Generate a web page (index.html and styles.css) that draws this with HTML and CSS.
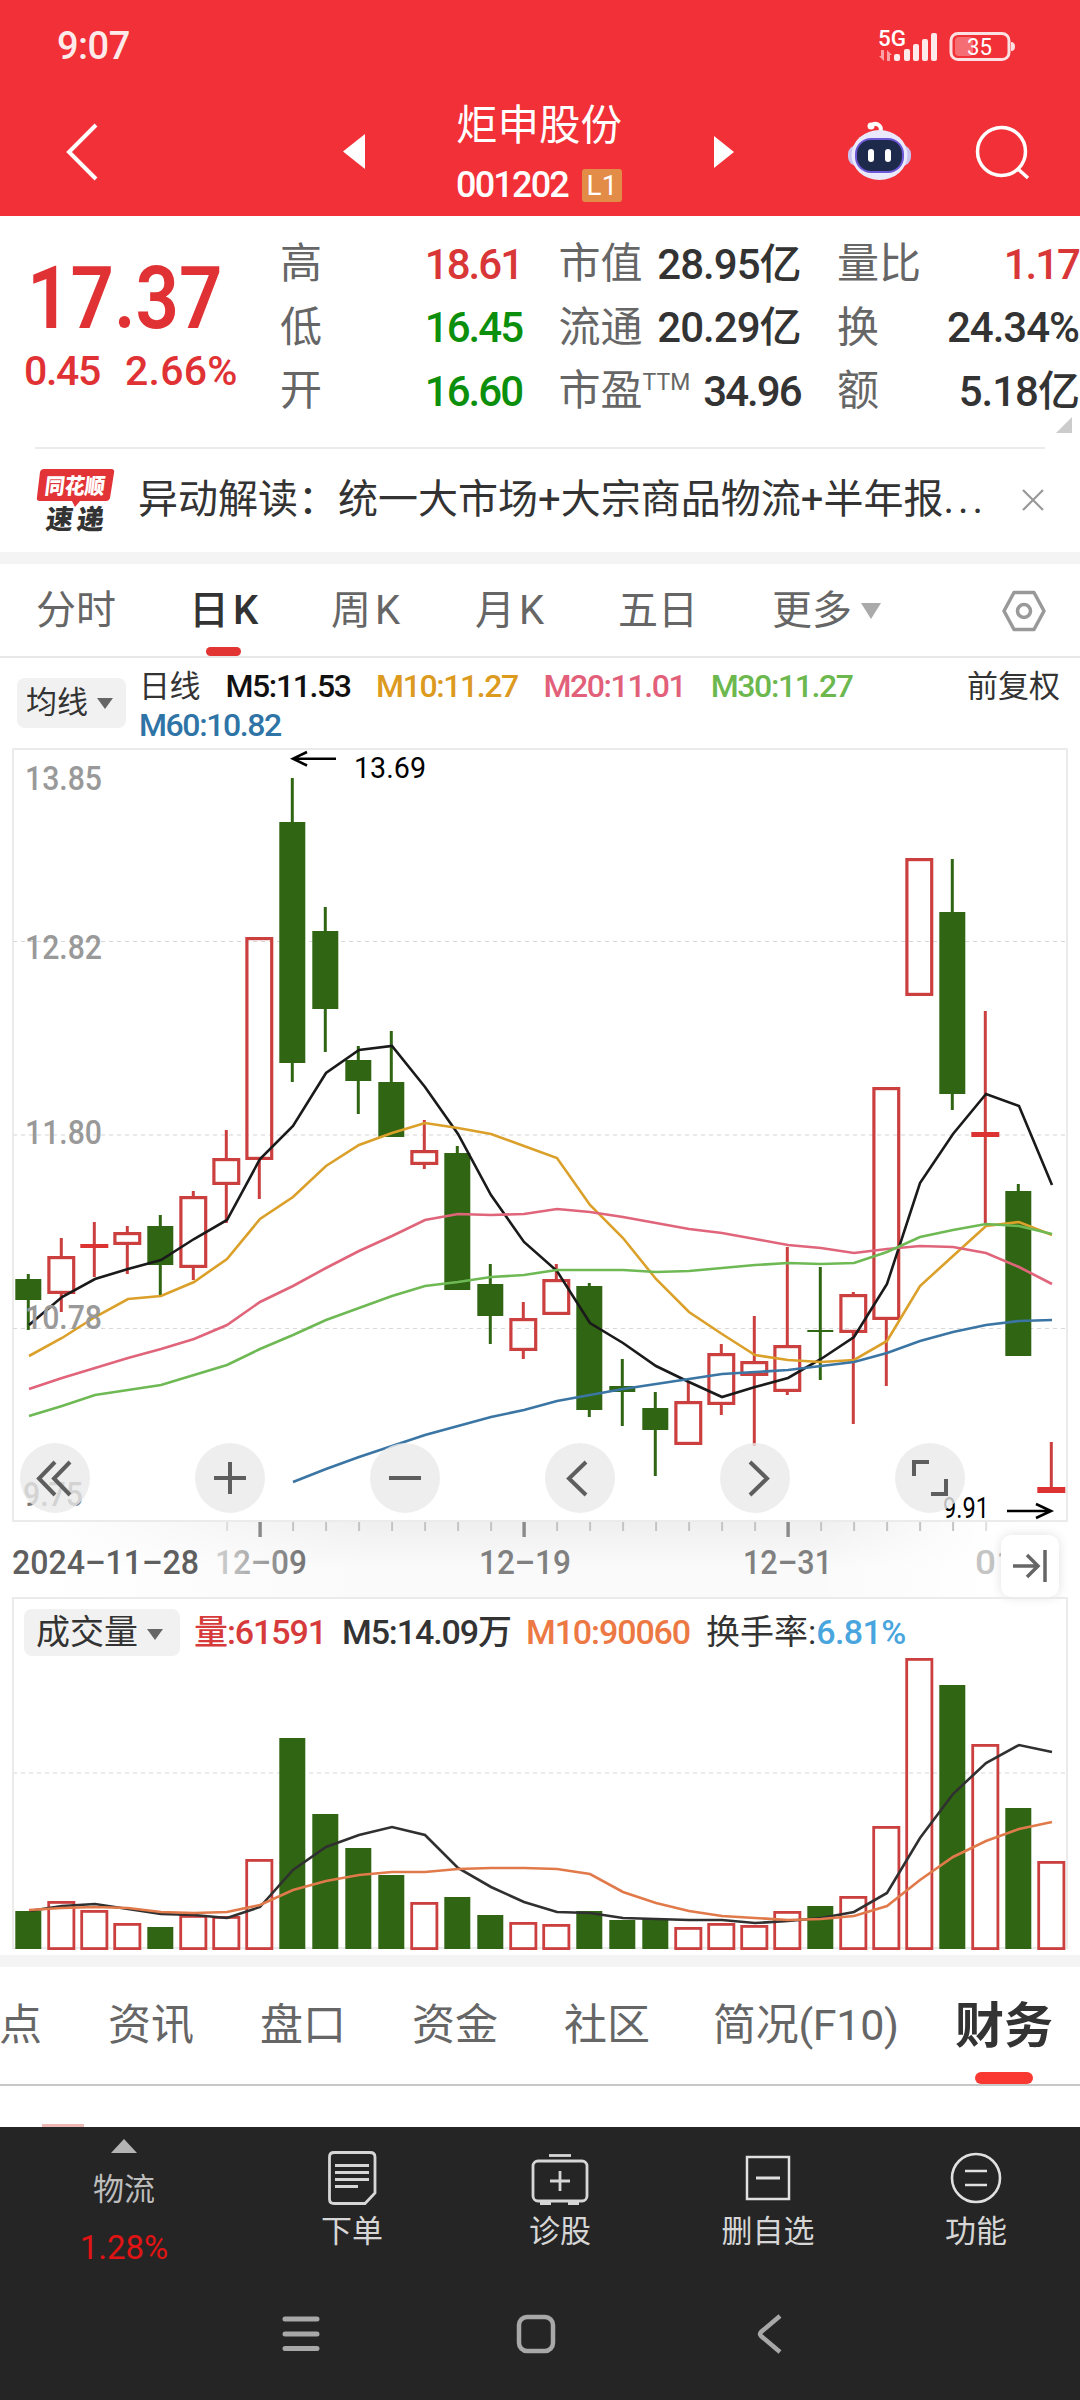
FILE: index.html
```html
<!DOCTYPE html>
<html lang="zh-CN">
<head>
<meta charset="UTF-8">
<meta name="viewport" content="width=device-width, initial-scale=1.0">
<title>炬申股份 001202</title>
<link rel="stylesheet" href="styles.css">
</head>
<body>

<header class="header">
  <div class="status">
    <span class="clock">9:07</span>
    <svg class="status-icons" width="140" height="36" viewBox="877 27 140 36">
      <text class="net" x="878" y="45" textLength="28" lengthAdjust="spacingAndGlyphs">5G</text>
      <g fill="#fff" fill-opacity=".55">
        <path d="M881 49h3v11l-5-5h2zM887 60h3v-6h2l-5-5z"/>
      </g>
      <g fill="#fff" fill-opacity=".9">
        <rect x="894" y="53" width="6" height="7" rx="2"/>
        <rect x="904" y="48" width="6" height="12" rx="2"/>
        <rect x="913" y="43" width="6" height="17" rx="2"/>
        <rect x="922" y="38" width="6" height="22" rx="2"/>
        <rect x="931" y="32" width="6" height="28" rx="2"/>
      </g>
      <rect x="951" y="32.500" width="58" height="26" rx="7" fill="none" stroke="#fff" stroke-opacity=".85" stroke-width="3"/>
      <rect x="955" y="36" width="18" height="19" rx="4" fill="#fff" fill-opacity=".3"/>
      <path d="M1011 41q4 0 4 4.500t-4 4.500z" fill="#fff" fill-opacity=".85"/>
      <text class="batt" x="967" y="54" textLength="25" lengthAdjust="spacingAndGlyphs">35</text>
    </svg>
  </div>
  <div class="titlebar">
    <svg class="back" width="34" height="60" viewBox="65 121 34 60"><path d="M96 124L69 151L96 178" fill="none" stroke="#fff" stroke-width="4"/></svg>
    <svg class="prev" width="24" height="38" viewBox="342 134 24 38"><path d="M343 152.500L365 135V170z" fill="#fff"/></svg>
    <div class="stock">
      <div class="stock-name">炬申股份</div>
      <div class="stock-code"><span class="code">001202</span><span class="level">L1</span></div>
    </div>
    <svg class="next" width="24" height="38" viewBox="712 134 24 38"><path d="M734 153L714 137V169z" fill="#fff"/></svg>
    <svg class="robot" width="66" height="64" viewBox="847 120 66 64">
      <path d="M880 133C883 126 877 122 872 125" fill="none" stroke="#fff" stroke-width="4" stroke-linecap="round"/>
      <circle cx="871" cy="126" r="3.500" fill="#fff"/>
      <rect x="848" y="145" width="63" height="21" rx="9" fill="#c9c2f0"/>
      <ellipse cx="879.500" cy="155" rx="28" ry="25" fill="#e9e9fb"/>
      <rect x="855" y="138" width="49" height="35" rx="16" fill="#6d58d6"/>
      <rect x="857" y="140" width="45" height="31" rx="14" fill="#1e2a4c"/>
      <rect x="868" y="149" width="6" height="13" rx="3" fill="#fff"/>
      <rect x="885" y="149" width="6" height="13" rx="3" fill="#fff"/>
    </svg>
    <svg class="search" width="56" height="58" viewBox="974 123 56 58"><g fill="none" stroke="#fff" stroke-width="3.500"><circle cx="1001.500" cy="151.500" r="24"/><path d="M1018 169L1028 178"/></g></svg>
  </div>
</header>

<section class="quote">
  <div class="last">
    <div class="price">17.37</div>
    <div class="change"><span>0.45</span><span class="pct">2.66%</span></div>
  </div>
  <div class="stats">
    <div class="stat"><span class="label">高</span><span class="val up">18.61</span></div>
    <div class="stat"><span class="label">市值</span><span class="val wide">28.95亿</span></div>
    <div class="stat"><span class="label">量比</span><span class="val up">1.17</span></div>
    <div class="stat"><span class="label">低</span><span class="val down">16.45</span></div>
    <div class="stat"><span class="label">流通</span><span class="val wide">20.29亿</span></div>
    <div class="stat"><span class="label">换</span><span class="val wide">24.34%</span></div>
    <div class="stat"><span class="label">开</span><span class="val down">16.60</span></div>
    <div class="stat"><span class="label">市盈<sup>TTM</sup></span><span class="val">34.96</span></div>
    <div class="stat"><span class="label">额</span><span class="val wide">5.18亿</span></div>
  </div>
  <div class="expand"></div>
</section>

<section class="news">
  <svg class="news-logo" width="80" height="66" viewBox="34 466 80 66">
    <path d="M43 468H110Q114 468 113 472L109 497Q108 500 105 500H79L74 506L71 500H39Q35 500 36 496L39 471Q40 468 43 468z" fill="#e23336"/>
    <text class="logo-top" transform="translate(43 493) skewX(-7)" textLength="60" lengthAdjust="spacingAndGlyphs">同花顺</text>
    <text class="logo-bottom" transform="translate(44 528) skewX(-7)" textLength="58">速递</text>
  </svg>
  <span class="news-text">异动解读：统一大市场+大宗商品物流+半年报<span class="dots">...</span></span>
  <svg class="close" width="24" height="24" viewBox="0 0 24 24"><path d="M2 2L22 22M22 2L2 22" stroke="#999" stroke-width="2.200"/></svg>
</section>

<nav class="periods">
  <span class="period">分时</span>
  <span class="period active">日<i>K</i></span>
  <span class="period">周<i>K</i></span>
  <span class="period">月<i>K</i></span>
  <span class="period">五日</span>
  <span class="period more">更多</span>
  <svg class="gear" width="44" height="44" viewBox="0 0 44 44"><g fill="none" stroke="#999" stroke-width="3.500"><path d="M12 3.500H32L42 22L32 40.500H12L2 22z" stroke-linejoin="round"/><circle cx="22" cy="22" r="6.500"/></g></svg>
</nav>

<section class="ma">
  <span class="pill ma-pill">均线</span>
  <div class="ma-list">
    <span class="ma-name">日线</span>
    <span class="m5">M5:11.53</span>
    <span class="m10">M10:11.27</span>
    <span class="m20">M20:11.01</span>
    <span class="m30">M30:11.27</span>
    <span class="m60">M60:10.82</span>
  </div>
  <span class="adjust">前复权</span>
</section>

<section class="kline">
  <svg id="kline" width="1080" height="773" viewBox="0 749 1080 773"></svg>
  <div class="tools">
    <span class="tool"><svg viewBox="0 0 70 70"><path d="M35 19L19 35.500L35 52M50 19L34 35.500L50 52"/></svg></span>
    <span class="tool"><svg viewBox="0 0 70 70"><path d="M19 35H51M35 19V51"/></svg></span>
    <span class="tool"><svg viewBox="0 0 70 70"><path d="M19 35H51"/></svg></span>
    <span class="tool"><svg viewBox="0 0 70 70"><path d="M41 19L24 35.500L41 52"/></svg></span>
    <span class="tool"><svg viewBox="0 0 70 70"><path d="M30 19L47 35.500L30 52"/></svg></span>
    <span class="tool"><svg viewBox="0 0 70 70"><path d="M19 33V19H34M51 36V51H36"/></svg></span>
  </div>
</section>

<section class="axis">
  <svg id="axis" width="1080" height="76" viewBox="0 1522 1080 76"></svg>
  <span class="to-end"><svg width="36" height="34" viewBox="0 0 36 34"><path d="M1 17H26M15 6L26 17L15 28M33 1V33" fill="none" stroke="#666" stroke-width="3.500"/></svg></span>
</section>

<section class="volume">
  <svg id="volume" width="1080" height="357" viewBox="0 1598 1080 357"></svg>
  <div class="vol-head">
    <span class="pill vol-pill">成交量</span>
    <span class="v-now">量:61591</span>
    <span class="v-m5">M5:14.09万</span>
    <span class="v-m10">M10:90060</span>
    <span class="v-rate">换手率:<b>6.81%</b></span>
  </div>
</section>

<nav class="sections">
  <span>点</span>
  <span>资讯</span>
  <span>盘口</span>
  <span>资金</span>
  <span>社区</span>
  <span class="f10">简况(F10)</span>
  <span class="current">财务</span>
</nav>
<div class="content"><div class="peek"></div></div>

<footer class="bottom">
  <div class="actions">
    <div class="sector">
      <svg width="26" height="14" viewBox="0 0 26 14"><path d="M13 0L26 14H0z" fill="#b4b4b4"/></svg>
      <span class="sector-name">物流</span>
      <span class="sector-pct">1.28%</span>
    </div>
    <div class="action">
      <svg width="60" height="60" viewBox="322 2148 60 60"><g fill="none" stroke="#d6d6d6" stroke-width="2.800"><path d="M334 2152.500H370Q375 2152.500 375 2157V2193L365 2203.500H334Q329.500 2203.500 329.500 2199V2157Q329.500 2152.500 334 2152.500z"/><path d="M335 2165.500H369M335 2172.500H369M335 2179.500H369M335 2186.500H358"/></g></svg>
      <span>下单</span>
    </div>
    <div class="action">
      <svg width="60" height="60" viewBox="530 2148 60 60"><g fill="none" stroke="#d6d6d6" stroke-width="2.800"><path d="M549 2155.500H571"/><rect x="533" y="2161" width="54" height="40" rx="5"/><path d="M560 2171V2191M550 2181H570"/><path d="M540 2203.500H551M568 2203.500H579"/></g></svg>
      <span>诊股</span>
    </div>
    <div class="action">
      <svg width="60" height="60" viewBox="738 2148 60 60"><g fill="none" stroke="#e0e0e0" stroke-width="2.500"><rect x="747" y="2157" width="42" height="42"/><path d="M756 2178H780" stroke-width="3"/></g></svg>
      <span>删自选</span>
    </div>
    <div class="action">
      <svg width="60" height="60" viewBox="946 2148 60 60"><g fill="none" stroke="#e0e0e0" stroke-width="2.600"><circle cx="976" cy="2178" r="24"/><path d="M965 2171H987M965 2185H987"/></g></svg>
      <span>功能</span>
    </div>
  </div>
  <div class="sysnav">
    <svg width="38" height="40" viewBox="0 0 38 40"><path d="M3 5H35M3 20H35M3 34.500H35" stroke="#a8a8a8" stroke-width="5" stroke-linecap="round"/></svg>
    <svg width="40" height="40" viewBox="0 0 40 40"><rect x="3" y="3" width="34" height="34" rx="8" fill="none" stroke="#a8a8a8" stroke-width="4.500"/></svg>
    <svg width="26" height="40" viewBox="0 0 26 40"><path d="M23 2L4 18Q2 20 4 22L23 38" fill="none" stroke="#a8a8a8" stroke-width="4.500"/></svg>
  </div>
</footer>

<script src="chart.js"></script>
</body>
</html>
```
FILE: styles.css
```css
* {
  box-sizing: border-box;
}

body {
  margin: 0;
  width: 1080px;
  background: #fff;
  color: #333;
  font-family: Roboto, "Noto Sans CJK SC", sans-serif;
  line-height: 1.2;
  overflow-x: hidden;
}

svg {
  display: block;
  overflow: visible;
}

/* header */
.header {
  height: 216px;
  background: #f13037;
  color: #fff;
}

.status {
  height: 88px;
  display: flex;
  justify-content: space-between;
  align-items: center;
  padding: 4px 63px 0 57px;
}

.clock {
  padding-top: 2px;
  font-size: 38px;
  font-weight: 500;
  letter-spacing: -0.5px;
  opacity: .9;
}

.net {
  font-size: 22px;
  font-weight: 500;
  fill: #fff;
}

.batt {
  font-size: 24px;
  fill: #fff;
}

.titlebar {
  height: 128px;
  display: flex;
  align-items: center;
  padding-left: 65px;
}

.prev {
  margin-left: 243px;
}

.stock {
  width: 346px;
  height: 128px;
  display: flex;
  flex-direction: column;
  align-items: center;
}

.stock-name {
  margin-top: 10px;
  font-size: 41.5px;
  line-height: 56px;
}

.stock-code {
  display: flex;
  align-items: center;
  gap: 14px;
  margin-top: 14px;
}

.code {
  font-size: 36px;
  font-weight: 500;
  line-height: 34px;
  letter-spacing: -1.8px;
}

.level {
  width: 40px;
  height: 33px;
  border-radius: 3px;
  background: #e38c48;
  font-size: 28px;
  line-height: 33px;
  text-align: center;
}

.robot {
  margin-left: 111px;
}

.search {
  margin-left: 61px;
}

/* quote */
.quote {
  position: relative;
  height: 231px;
  display: flex;
  padding-top: 16px;
}

.last {
  width: 280px;
  padding-left: 24px;
  color: #e03234;
}

.price {
  margin: 27px 0 0 3px;
  font-size: 88px;
  font-weight: 600;
  line-height: 78px;
  transform: scaleX(.865);
  transform-origin: left;
}

.change {
  display: flex;
  gap: 25px;
  margin-top: 11px;
  font-size: 41px;
  font-weight: 500;
  line-height: 46px;
  letter-spacing: -1.3px;
}

.pct {
  letter-spacing: 0.2px;
}

.stats {
  display: grid;
  grid-template-columns: repeat(3, 242px);
  grid-auto-rows: 63.5px;
  column-gap: 36.5px;
}

.stat {
  display: flex;
  justify-content: space-between;
  align-items: center;
  white-space: nowrap;
  font-size: 42px;
}

.label {
  padding-top: 1px;
  color: #666;
}

.label sup {
  font-size: 23px;
  line-height: 0;
  vertical-align: 15px;
}

.val {
  padding-top: 2px;
  font-weight: 500;
  letter-spacing: -2px;
}

.wide {
  letter-spacing: -1px;
}

.up {
  color: #d93638;
}

.down {
  color: #0c8f0c;
}

.expand {
  position: absolute;
  right: 8px;
  bottom: 14px;
  border-left: 16px solid transparent;
  border-bottom: 16px solid #ccc;
}

/* news strip */
.news {
  height: 105px;
  margin: 0 35px;
  padding-bottom: 2px;
  border-top: 2px solid #ececec;
  display: flex;
  align-items: center;
}

.logo-top {
  font: 900 22px "Noto Sans CJK SC", sans-serif;
  fill: #fff;
}

.logo-bottom {
  font: 900 27px "Noto Sans CJK SC", sans-serif;
  fill: #333;
}

.news-text {
  width: 908px;
  padding-left: 23px;
  font-size: 40px;
  white-space: nowrap;
}

.dots {
  letter-spacing: 4px;
}

.close {
  margin-left: -1px;
}

/* period tabs */
.periods {
  height: 106px;
  border-top: 12px solid #f4f4f4;
  border-bottom: 2px solid #e8e8e8;
  display: flex;
  align-items: center;
  padding: 2px 0 0 36px;
}

.period {
  position: relative;
  width: 78px;
  margin-right: 75px;
  font-size: 40px;
  color: #666;
  white-space: nowrap;
}

.period i {
  font-style: normal;
  margin-left: 4px;
}

.period:nth-child(2) {
  margin-right: 64px;
}

.period:nth-child(3) {
  margin-right: 66px;
}

.period:nth-child(4) {
  margin-right: 65px;
}

.period:nth-child(5) {
  margin-right: 76px;
}

.active {
  color: #333;
  font-weight: 500;
}

.active::after {
  content: "";
  position: absolute;
  left: 17px;
  bottom: -21px;
  width: 35px;
  height: 9px;
  border-radius: 5px;
  background: #e33434;
}

.more::after {
  content: "";
  display: inline-block;
  margin: 0 0 5px 9px;
  border: 10px solid transparent;
  border-top: 16px solid #aaa;
  border-bottom: 0;
}

.gear {
  margin-left: 2px;
}

.more {
  margin-right: 150px;
}

/* moving averages */
.ma {
  height: 91px;
  display: flex;
  padding-left: 17px;
}

.pill {
  background: #f1f1f1;
  border-radius: 8px;
  white-space: nowrap;
}

.pill::after {
  content: "";
  display: inline-block;
  margin: 0 0 4px 9px;
  border: 8px solid transparent;
  border-top: 11px solid #666;
  border-bottom: 0;
}

.ma-pill {
  width: 109px;
  height: 50px;
  margin-top: 20px;
  padding-left: 9px;
  font-size: 31px;
  line-height: 50px;
}

.ma-list {
  width: 826px;
  display: flex;
  flex-wrap: wrap;
  align-content: flex-start;
  column-gap: 25.5px;
  padding: 9px 60px 0 13px;
  font-size: 32px;
  font-weight: 500;
  line-height: 39px;
  letter-spacing: -1.4px;
}

.ma-name {
  font-size: 31px;
  font-weight: 400;
  letter-spacing: -0.5px;
}

.m5 { color: #111; }
.m10 { color: #dc9a1e; }
.m20 { color: #e2607a; }
.m30 { color: #6cb84e; }
.m60 { color: #2f74a6; }

.adjust {
  margin-left: 15px;
  font-size: 31px;
  line-height: 57px;
}

/* charts */
.kline {
  position: relative;
  height: 773px;
}

.tools {
  position: absolute;
  left: 20px;
  top: 694px;
  display: flex;
  gap: 105px;
}

.tool {
  width: 70px;
  height: 70px;
  border-radius: 50%;
  background: rgba(234, 234, 234, .8);
}

.tool path {
  fill: none;
  stroke: #5e5e5e;
  stroke-width: 4;
}

.price-label {
  font-size: 34px;
  font-weight: 500;
  fill: #999;
}

.low-label {
  font-size: 34px;
  font-weight: 500;
  fill: #777;
}

.mark-label {
  font-size: 30px;
  fill: #000;
}

.axis {
  position: relative;
  height: 76px;
  background: linear-gradient(to right, #fff 3%, transparent 35%, transparent 75%, #fff 92%), linear-gradient(#efefef, #fafafa 60%);
}

.date-label {
  font-size: 34px;
  font-weight: 500;
  fill: #808080;
}

.to-end {
  position: absolute;
  left: 1001px;
  top: 13px;
  width: 58px;
  height: 62px;
  display: flex;
  align-items: center;
  justify-content: center;
  border-radius: 10px;
  background: #fff;
  box-shadow: 0 0 12px rgba(0, 0, 0, .12);
}

.volume {
  position: relative;
  height: 357px;
}

.vol-head {
  position: absolute;
  left: 24px;
  top: 11px;
  display: flex;
  font-size: 34px;
  font-weight: 500;
  line-height: 47px;
  letter-spacing: -1.1px;
  white-space: nowrap;
}

.vol-pill {
  width: 156px;
  height: 47px;
  padding-left: 12px;
  margin-right: 14px;
  font-weight: 400;
  letter-spacing: 0;
}

.v-now {
  width: 148px;
  color: #d63a3a;
}

.v-m5 {
  width: 184px;
}

.v-m10 {
  width: 180px;
  color: #ec7843;
}

.v-rate {
  font-weight: 400;
  letter-spacing: 0;
}

.v-rate b {
  font-weight: 500;
  letter-spacing: -0.6px;
  color: #49a5dd;
}

/* section tabs */
.sections {
  height: 131px;
  padding-top: 1px;
  border-top: 12px solid #f4f4f4;
  border-bottom: 2px solid #c8c8c8;
  display: flex;
  align-items: center;
  font-size: 43px;
  color: #666;
  white-space: nowrap;
}

.sections span {
  width: 84px;
  margin-right: 68px;
}

.sections span:first-child {
  width: 42px;
  margin: 0 67px 0 -1px;
}

.sections .f10 {
  width: 184px;
  margin-right: 58px;
  margin-left: -3px;
  letter-spacing: -0.3px;
}

.sections .current {
  position: relative;
  width: 98px;
  margin-right: 0;
  padding-top: 2px;
  font-size: 49px;
  font-weight: 700;
  color: #333;
}

.current::after {
  content: "";
  position: absolute;
  left: 20px;
  bottom: -28px;
  width: 58px;
  height: 12px;
  border-radius: 6px;
  background: #fa3a32;
}

.content {
  height: 41px;
  display: flex;
  align-items: flex-end;
}

.peek {
  width: 42px;
  height: 3px;
  margin-left: 42px;
  background: #f0b8b4;
}

/* bottom bars */
.bottom {
  height: 273px;
  background: #252525;
  color: #d6d6d6;
}

.actions {
  display: flex;
  height: 155px;
  font-size: 31px;
  line-height: 44px;
}

.sector {
  width: 248px;
  display: flex;
  flex-direction: column;
  align-items: center;
  padding-top: 12px;
}

.sector-name {
  margin-top: 15px;
  color: #bdbdbd;
}

.sector-pct {
  margin-top: 14px;
  font-size: 33px;
  color: #e01414;
}

.action {
  width: 208px;
  display: flex;
  flex-direction: column;
  align-items: center;
  padding-top: 21px;
}

.action span {
  margin-top: 2px;
}

.sysnav {
  display: flex;
  align-items: center;
  height: 104px;
  padding-left: 282px;
  gap: 196px;
}

.sysnav svg:last-child {
  margin-left: 5px;
}
```
FILE: chart.js
```js
const UP = '#cb3f3f';
const DOWN = '#306613';
const x = i => 28.3 + 33 * i;

// [direction, body top, body bottom, high, low]
const candles = [
  ['d', 1279, 1300, 1274, 1330], ['u', 1256, 1294, 1238, 1312], ['u', 1244, 1248, 1222, 1277],
  ['u', 1232, 1245, 1226, 1274], ['d', 1226, 1265, 1215, 1295], ['u', 1196, 1268, 1191, 1280],
  ['u', 1158, 1185, 1130, 1223], ['u', 937, 1160, 937, 1199], ['d', 822, 1063, 778, 1082],
  ['d', 931, 1009, 907, 1052], ['d', 1060, 1081, 1046, 1114], ['d', 1082, 1137, 1031, 1137],
  ['u', 1150, 1165, 1120, 1169], ['d', 1153, 1290, 1146, 1290], ['d', 1284, 1316, 1264, 1344],
  ['u', 1318, 1351, 1302, 1359], ['u', 1279, 1315, 1264, 1315], ['d', 1286, 1410, 1283, 1417],
  ['d', 1386, 1392, 1359, 1426], ['d', 1408, 1430, 1392, 1476], ['u', 1401, 1445, 1382, 1445],
  ['u', 1353, 1405, 1344, 1415], ['u', 1361, 1376, 1316, 1446], ['u', 1345, 1392, 1247, 1395],
  ['d', 1330, 1332, 1267, 1380], ['u', 1294, 1333, 1292, 1424], ['u', 1087, 1320, 1087, 1386],
  ['u', 858, 996, 858, 996], ['d', 912, 1094, 859, 1110], ['u', 1132, 1137, 1011, 1223],
  ['d', 1191, 1356, 1184, 1356], ['u', 1487, 1493, 1442, 1493]
];

const averages = [
  ['#1a1a1a', 0, [1325, 1297, 1279, 1269, 1260, 1239, 1220, 1159, 1126, 1073, 1050, 1046, 1087, 1134, 1195, 1242, 1271, 1323, 1343, 1366, 1382, 1397, 1387, 1378, 1359, 1337, 1284, 1183, 1134, 1094, 1106, 1185]],
  ['#dba02a', 0, [1356, 1338, 1317, 1299, 1296, 1282, 1259, 1219, 1197, 1166, 1145, 1133, 1123, 1128, 1134, 1146, 1158, 1205, 1238, 1279, 1312, 1334, 1355, 1360, 1362, 1360, 1341, 1286, 1256, 1226, 1222, 1235]],
  ['#e0657b', 0, [1389, 1378, 1368, 1358, 1349, 1339, 1325, 1302, 1286, 1268, 1251, 1236, 1220, 1214, 1215, 1214, 1209, 1212, 1217, 1223, 1229, 1233, 1239, 1245, 1248, 1253, 1249, 1246, 1247, 1253, 1267, 1284]],
  ['#6fb955', 0, [1416, 1406, 1395, 1390, 1385, 1375, 1365, 1349, 1335, 1320, 1308, 1296, 1286, 1282, 1277, 1275, 1270, 1270, 1270, 1272, 1271, 1268, 1265, 1263, 1264, 1263, 1252, 1237, 1230, 1224, 1226, 1234]],
  ['#3a75a4', 8, [1482, 1469, 1457, 1446, 1435, 1426, 1417, 1410, 1401, 1395, 1389, 1384, 1379, 1374, 1372, 1370, 1366, 1362, 1353, 1341, 1332, 1325, 1321, 1320]]
];

const volumes = [1911, 1901, 1910, 1923, 1927, 1915, 1916, 1859, 1738, 1814, 1848, 1875, 1902, 1897, 1915, 1922, 1924, 1911, 1920, 1919, 1927, 1923, 1925, 1911, 1906, 1896, 1826, 1658, 1685, 1744, 1808, 1861];

const volumeAverages = [
  ['#303030', 0, [1911, 1906, 1904, 1909, 1914, 1915, 1918, 1907, 1870, 1847, 1835, 1827, 1835, 1868, 1887, 1902, 1912, 1913, 1918, 1919, 1920, 1920, 1923, 1921, 1918, 1912, 1893, 1838, 1794, 1763, 1745, 1752]],
  ['#e17a4b', 0, [1910, 1908, 1907, 1908, 1912, 1913, 1912, 1905, 1890, 1881, 1875, 1872, 1872, 1869, 1868, 1868, 1869, 1874, 1892, 1903, 1911, 1916, 1918, 1920, 1919, 1916, 1906, 1880, 1857, 1841, 1829, 1822]]
];

function line(x1, y1, x2, y2, color, width, extra = '') {
  return `<line x1="${x1}" y1="${y1}" x2="${x2}" y2="${y2}" stroke="${color}" stroke-width="${width}" ${extra}/>`;
}

function text(cls, tx, ty, width, value, extra = '') {
  return `<text class="${cls}" x="${tx}" y="${ty}" textLength="${width}" lengthAdjust="spacingAndGlyphs" ${extra}>${value}</text>`;
}

function curve([color, start, ys]) {
  const points = ys.map((y, i) => `${x(i + start) + 0.7},${y}`).join(' ');
  return `<polyline points="${points}" fill="none" stroke="${color}" stroke-width="2.6"/>`;
}

function box(i, top, bottom, dir, stroke) {
  if (dir === 'd') return `<rect x="${x(i) - 13}" y="${top}" width="26" height="${bottom - top}" fill="${DOWN}"/>`;
  if (bottom - top < 8) return `<rect x="${x(i) - 14}" y="${top}" width="28" height="${bottom - top}" fill="#dc3232"/>`;
  const s = stroke / 2;
  return `<rect x="${x(i) - 14 + s}" y="${top + s}" width="${28 - stroke}" height="${bottom - top - stroke}" fill="none" stroke="${UP}" stroke-width="${stroke}"/>`;
}

function frame(y1, y2) {
  return `<rect x="13" y="${y1}" width="1054" height="${y2 - y1}" fill="none" stroke="#ebebeb" stroke-width="2"/>`;
}

function drawKline() {
  const dash = 'stroke-dasharray="4 4"';
  let out = frame(749, 1521);
  out += line(13, 941.5, 1066, 941.5, '#d8d8d8', 1, dash);
  out += line(13, 1135, 1066, 1135, '#e9e9e9', 2, dash);
  out += line(13, 1328.5, 1066, 1328.5, '#d8d8d8', 1, dash);
  candles.forEach(([dir, top, bottom, high, low], i) => {
    const color = dir === 'u' ? UP : DOWN;
    if (high < top) out += line(x(i), high, x(i), top, color, 3);
    if (low > bottom) out += line(x(i), bottom, x(i), low, color, 3);
    out += box(i, top, bottom, dir, 3.2);
  });
  out += averages.map(curve).join('');
  out += text('price-label', 25, 790, 77, '13.85');
  out += text('price-label', 25, 959, 77, '12.82');
  out += text('price-label', 25, 1144, 77, '11.80');
  out += text('price-label', 25, 1329, 77, '10.78');
  out += text('low-label', 23, 1506, 60, '9.75');
  out += text('mark-label', 354, 778, 72, '13.69');
  out += text('mark-label', 943, 1518, 46, '9.91');
  out += '<g fill="none" stroke="#000" stroke-width="2.6"><path d="M336 758.700H293M307 752L293 758.700L307 765.500"/><path d="M1007 1511H1051M1036 1504L1051 1511L1036 1518"/></g>';
  document.getElementById('kline').innerHTML = out;
}

function drawAxis() {
  let out = '';
  for (let i = 6; i < 30; i++) {
    const major = i % 8 === 7;
    const fade = i === 6 || i === 29 ? 'opacity=".5"' : '';
    out += line(x(i) + 0.8, 1522, x(i) + 0.8, major ? 1537 : 1531, major ? '#8a8a8a' : '#c4c4c4', major ? 3.4 : 2, fade);
  }
  out += '<defs><linearGradient id="fade" gradientUnits="userSpaceOnUse" x1="205" y1="0" x2="300" y2="0"><stop offset="0" stop-color="#ddd"/><stop offset="1" stop-color="#777"/></linearGradient></defs>';
  out += text('date-label', 12, 1574, 187, '2024–11–28', 'style="fill:#5f5f5f"');
  out += text('date-label', 215, 1574, 92, '12–09', 'style="fill:url(#fade)"');
  out += text('date-label', 479, 1574, 92, '12–19');
  out += text('date-label', 743, 1574, 89, '12–31');
  out += text('date-label', 975, 1574, 42, '01', 'style="fill:#c4c4c4"');
  document.getElementById('axis').innerHTML = out;
}

function drawVolume() {
  let out = frame(1598, 1948);
  out += line(13, 1773, 1066, 1773, '#ebebeb', 2, 'stroke-dasharray="4 4"');
  volumes.forEach((top, i) => {
    const dir = candles[i][0];
    out += box(i, top, dir === 'u' ? 1950 : 1949, dir, 2.8);
  });
  out += volumeAverages.map(curve).join('');
  document.getElementById('volume').innerHTML = out;
}

drawKline();
drawAxis();
drawVolume();
```
